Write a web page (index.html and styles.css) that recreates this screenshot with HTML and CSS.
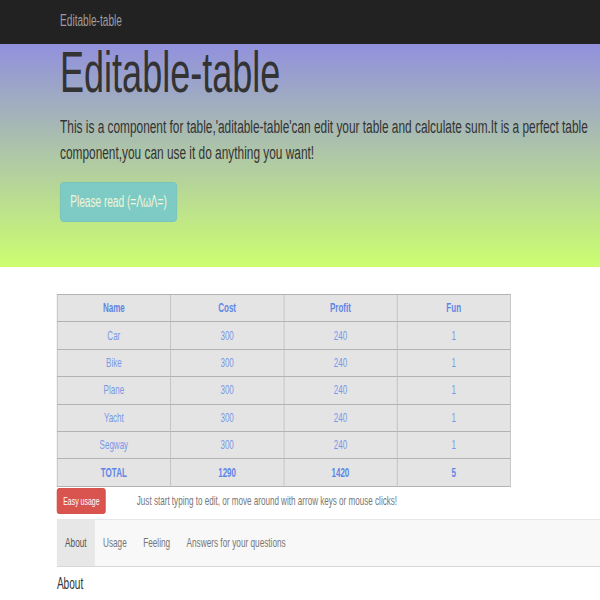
FILE: index.html
```html
<!DOCTYPE html>
<html lang="en">
<head>
<meta charset="utf-8">
<title>Editable-table</title>
<link rel="stylesheet" href="styles.css">
</head>
<body>
<div class="frame">
<div class="page">
  <nav class="navbar">
    <span class="brand">Editable-table</span>
  </nav>
  <header class="jumbotron">
    <h1>Editable-table</h1>
    <p>This is a component for table,'aditable-table'can edit your table and calculate sum.It is a perfect table component,you can use it do anything you want!</p>
    <a class="btn-read">Please read (=ΛωΛ=)</a>
  </header>
  <main class="content">
    <table class="grid">
      <thead>
        <tr><th>Name</th><th>Cost</th><th>Profit</th><th>Fun</th></tr>
      </thead>
      <tbody>
        <tr><td>Car</td><td>300</td><td>240</td><td>1</td></tr>
        <tr><td>Bike</td><td>300</td><td>240</td><td>1</td></tr>
        <tr><td>Plane</td><td>300</td><td>240</td><td>1</td></tr>
        <tr><td>Yacht</td><td>300</td><td>240</td><td>1</td></tr>
        <tr><td>Segway</td><td>300</td><td>240</td><td>1</td></tr>
      </tbody>
      <tfoot>
        <tr><th>TOTAL</th><th>1290</th><th>1420</th><th>5</th></tr>
      </tfoot>
    </table>
    <div class="hint-row">
      <span class="btn-easy">Easy usage</span>
      <span class="hint">Just start typing to edit, or move around with arrow keys or mouse clicks!</span>
    </div>
    <ul class="tabs">
      <li class="tab active">About</li>
      <li class="tab">Usage</li>
      <li class="tab">Feeling</li>
      <li class="tab">Answers for your questions</li>
    </ul>
    <h3 class="section-title">About</h3>
  </main>
</div>
</div>
</body>
</html>
```
FILE: styles.css
```css
html, body {
  margin: 0;
  padding: 0;
  overflow: hidden;
  background: #fff;
}
body {
  font-family: "Liberation Sans", Arial, sans-serif;
  color: #333;
}
.frame {
  width: 600px;
  height: 600px;
  overflow: hidden;
}
.page {
  width: 950px;
  overflow: hidden;
  transform: scaleX(0.632);
  transform-origin: 0 0;
}
.navbar {
  height: 44px;
  background: #222;
  display: flex;
  align-items: center;
  padding-left: 95px;
}
.brand {
  color: #9d9d9d;
  font-size: 16px;
  line-height: 20px;
  margin-top: -3px;
}
.jumbotron {
  background: linear-gradient(to bottom, #9190dd 0%, #ccfe70 100%);
  padding: 0 0 45px 95px;
}
.jumbotron h1 {
  margin: 0;
  font-size: 57px;
  line-height: 56px;
  font-weight: 400;
  color: #333;
}
.jumbotron p {
  margin: 14px 0 16px;
  font-size: 18.8px;
  line-height: 26px;
  color: #333;
}
.btn-read {
  display: inline-flex;
  align-items: center;
  box-sizing: border-box;
  height: 40px;
  padding: 0 15px;
  background: #7ecbc5;
  border: 1px solid #70c2bc;
  border-radius: 5px;
  color: #f4f4d6;
  font-size: 16px;
}
.content {
  padding: 27px 0 0 90px;
}
.grid {
  width: 718px;
  border-collapse: collapse;
  background: #e4e4e4;
  border: 1px solid #a6a6a6;
  font-size: 12.7px;
}
.grid th, .grid td {
  border: 1px solid #b3b3b3;
  height: 26.4px;
  padding: 0;
  text-align: center;
  width: 25%;
}
.grid th {
  color: #5f86e6;
  font-weight: 700;
}
.grid td {
  color: #7898e8;
  font-weight: 400;
}
.hint-row {
  display: flex;
  align-items: center;
  margin-top: 1px;
}
.btn-easy {
  display: inline-flex;
  align-items: center;
  box-sizing: border-box;
  height: 26px;
  padding: 0 9px;
  background: #d9534f;
  border: 1px solid #d43f3a;
  border-radius: 3px;
  color: #fff;
  font-size: 11px;
}
.hint {
  margin-left: 49px;
  font-size: 12.8px;
  color: #777;
}
.tabs {
  list-style: none;
  margin: 5px 0 0;
  padding: 0;
  display: flex;
  height: 46px;
  background: #f8f8f8;
  border-top: 1px solid #e7e7e7;
  border-bottom: 1px solid #d8d8d8;
}
.tab {
  display: flex;
  align-items: center;
  padding: 0 13px;
  font-size: 13px;
  color: #777;
}
.tab.active {
  background: #e7e7e7;
  color: #555;
}
.section-title {
  margin: 7px 0 0;
  font-size: 16px;
  line-height: 20px;
  font-weight: 400;
  color: #333;
}
```
